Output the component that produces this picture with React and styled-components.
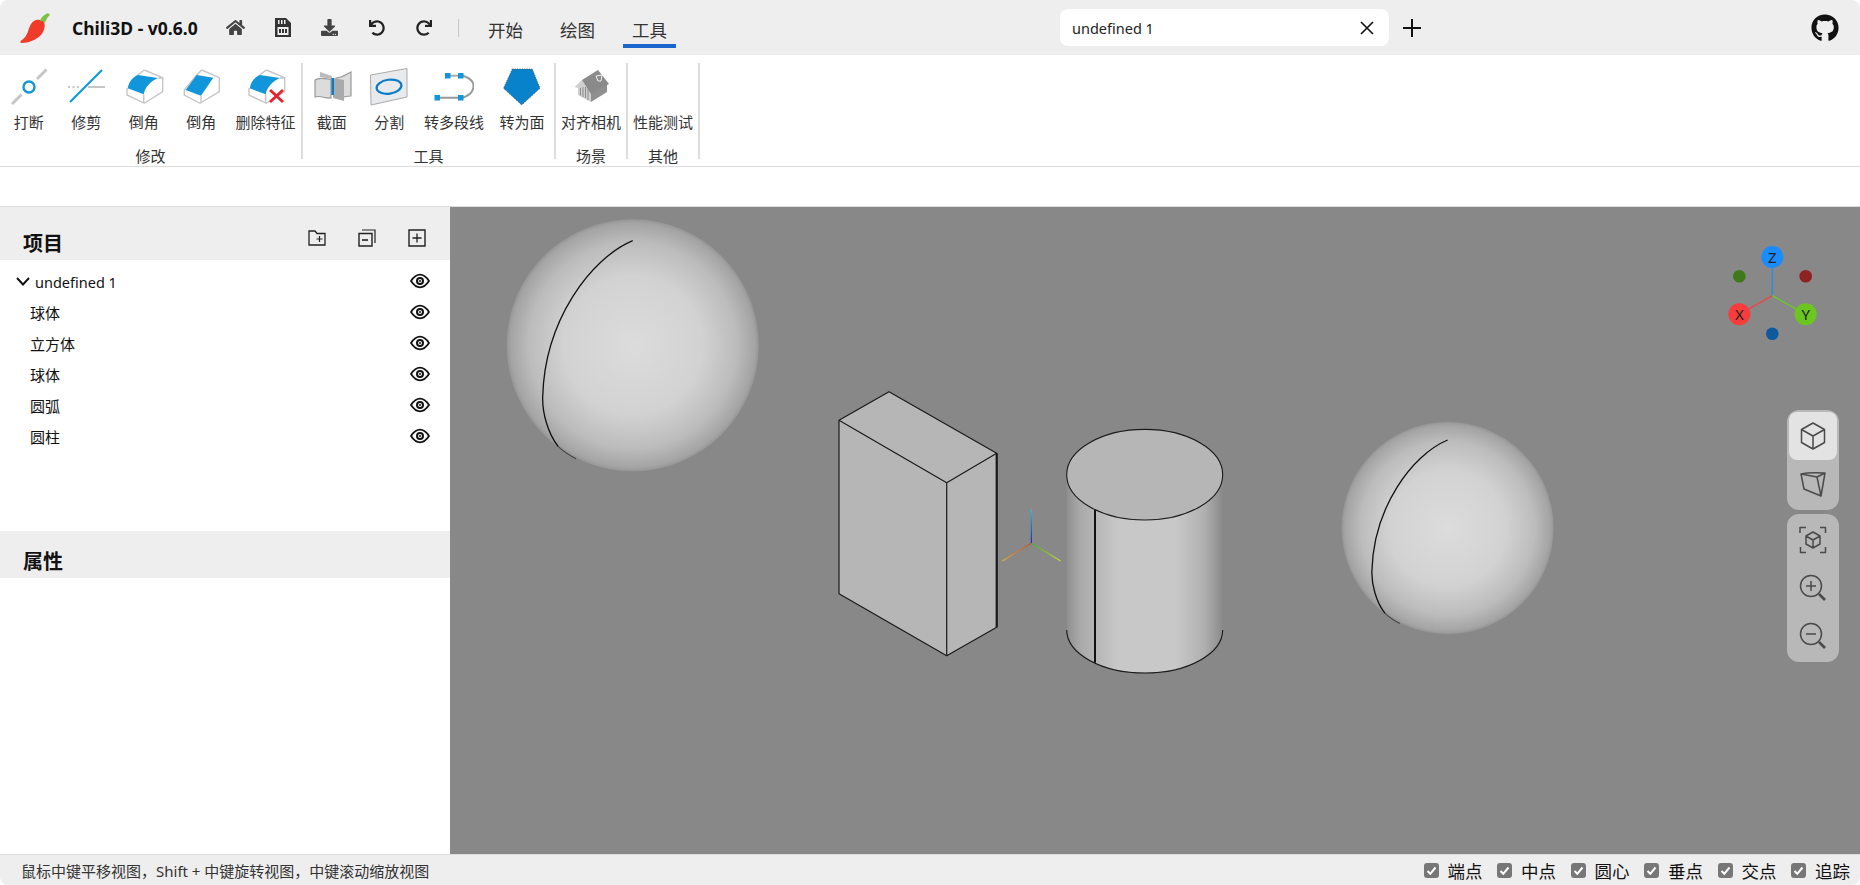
import styled, { createGlobalStyle } from "styled-components";
import { FaDownload, FaGithub, FaHome, FaRedo, FaUndo } from "react-icons/fa";

const GlobalStyle = createGlobalStyle`
  html, body {
    margin: 0;
    height: 100%;
    background: #fff;
  }
  #root {
    height: 100%;
  }
  * {
    box-sizing: border-box;
  }
`;

const BLUE = "#1296db";
const GRAY = "#c6c6c6";

const Shell = styled.div`
  height: 100vh;
  display: flex;
  flex-direction: column;
  overflow: hidden;
  border-radius: 8px;
  color: #222;
  font-family: "Noto Sans", "Noto Sans CJK SC", sans-serif;
`;

/* title bar */
const TitleBar = styled.header`
  flex: none;
  height: 55px;
  display: grid;
  grid-template-columns: 1060px 329px 1fr auto;
  align-items: center;
  background: #eee;
`;

const TitleLeft = styled.div`
  display: flex;
  align-items: center;
  height: 100%;
`;

const Logo = styled.svg`
  width: 32px;
  height: 32px;
  margin-left: 19px;
`;

const AppName = styled.span`
  margin-left: 21px;
  width: 125px;
  font-size: 17.5px;
  font-weight: 700;
  color: #111;
  white-space: nowrap;
`;

const QuickActions = styled.div`
  display: flex;
  align-items: center;
  margin-left: 15px;
`;

const QuickButton = styled.span`
  width: 47px;
  display: flex;
  justify-content: center;
  color: ${(p) => p.$color || "#333"};
`;

const VSep = styled.span`
  width: 1px;
  height: 18px;
  background: #c4c4c4;
  margin: 0 20px 0 11px;
`;

const Tabs = styled.nav`
  display: flex;
  height: 100%;
  gap: 19px;
`;

const Tab = styled.div`
  width: 53px;
  height: 48px;
  padding-top: 14px;
  display: flex;
  align-items: center;
  justify-content: center;
  font-size: 17.5px;
  color: #333;
  border-bottom: 4px solid ${(p) => (p.$active ? "#1a66cc" : "transparent")};
`;

const DocTab = styled.div`
  height: 37px;
  padding: 0 12px;
  display: flex;
  align-items: center;
  justify-content: space-between;
  background: #fff;
  border-radius: 8px;
  font-size: 14.5px;
`;

const CloseIcon = styled.svg`
  width: 14px;
  height: 14px;
  margin-right: 3px;
`;

const AddDoc = styled.svg`
  width: 20px;
  height: 20px;
  margin-left: 13px;
`;

const GithubLink = styled.span`
  display: flex;
  font-size: 28px;
  color: #111;
  margin-right: 21px;
`;

/* ribbon */
const Ribbon = styled.section`
  flex: none;
  height: 112px;
  display: flex;
  align-items: flex-start;
  padding-top: 8px;
  border-bottom: 1px solid #ddd;
`;

const RibbonGroup = styled.div`
  height: 96px;
  display: flex;
  flex-direction: column;
  justify-content: space-between;
  border-right: 2px solid #ddd;
`;

const GroupItems = styled.div`
  display: flex;
`;

const GroupLabel = styled.div`
  line-height: 20px;
  margin-bottom: -7px;
  font-size: 15px;
  text-align: center;
  color: #333;
`;

const RibbonItem = styled.div`
  width: ${(p) => p.$width || 57.5}px;
  display: flex;
  flex-direction: column;
  align-items: center;
  padding-top: 4px;
`;

const RibbonIcon = styled.svg`
  width: 40px;
  height: 40px;
`;

const RibbonText = styled.span`
  margin-top: 5px;
  line-height: 20px;
  font-size: 15px;
  color: #333;
  white-space: nowrap;
`;

const OptionStrip = styled.div`
  flex: none;
  height: 40px;
  border-bottom: 1px solid #ddd;
`;

/* main */
const Main = styled.main`
  flex: 1;
  min-height: 0;
  display: flex;
`;

const Sidebar = styled.aside`
  flex: none;
  width: 450px;
  display: flex;
  flex-direction: column;
`;

const PanelHeader = styled.div`
  flex: none;
  height: ${(p) => p.$height}px;
  display: flex;
  align-items: flex-end;
  justify-content: space-between;
  padding: 0 24px 3px 23px;
  background: #eee;
`;

const PanelTitle = styled.h2`
  margin: 0;
  font-size: 20px;
  line-height: 27px;
  font-weight: 700;
  color: #111;
`;

const HeaderActions = styled.div`
  display: flex;
  gap: 32px;
  margin-bottom: 10px;
`;

const HeaderIcon = styled.svg`
  width: 18px;
  height: 18px;
`;

const Tree = styled.div`
  height: 271px;
  padding-top: 6px;
`;

const TreeRow = styled.div`
  height: 31px;
  display: flex;
  align-items: center;
  padding: 0 20px 0 ${(p) => (p.$root ? 16 : 30)}px;
  font-size: ${(p) => (p.$root ? 14.5 : 15)}px;
  color: #111;
`;

const RowLabel = styled.span`
  flex: 1;
`;

const Chevron = styled.svg`
  width: 14px;
  height: 9px;
  margin-right: 5px;
`;

const Eye = styled.svg`
  width: 20px;
  height: 16px;
  margin-top: -1px;
`;

const Viewport = styled.div`
  position: relative;
  flex: 1;
  min-width: 0;
  background: #888;
`;

const Scene = styled.svg`
  display: block;
  width: 100%;
  height: 100%;
`;

const ViewControls = styled.div`
  position: absolute;
  top: 203px;
  right: 21px;
  display: flex;
  flex-direction: column;
  gap: 4px;
`;

const ControlGroup = styled.div`
  width: 52px;
  padding: 2px;
  display: flex;
  flex-direction: column;
  background: #b8b8b8;
  border-radius: 12px;
`;

const ControlButton = styled.div`
  height: 48px;
  display: flex;
  align-items: center;
  justify-content: center;
  border-radius: 8px;
  background: ${(p) => (p.$active ? "#e3e3e3" : "transparent")};
`;

const ControlIcon = styled.svg`
  width: 28px;
  height: 28px;
`;

/* status bar */
const StatusBar = styled.footer`
  flex: none;
  height: 31px;
  display: flex;
  align-items: center;
  justify-content: space-between;
  padding: 0 10px 0 21px;
  background: #eee;
  border-top: 1px solid #ddd;
  font-size: 15px;
  color: #333;
`;

const SnapList = styled.div`
  display: flex;
  gap: 14.5px;
`;

const SnapOption = styled.label`
  display: flex;
  align-items: center;
  gap: 9px;
  font-size: 17.5px;
  color: #111;
`;

const SnapBox = styled.span`
  width: 15px;
  height: 15px;
  display: flex;
  align-items: center;
  justify-content: center;
  background: #777;
  border-radius: 3px;
`;

const ChiliLogo = () => (
  <Logo viewBox="0 0 32 32">
    <path d="M21 8C26 8 27 14 24 20C21 26 12 31 2 31C1 30 1 29 3 28C9 24 9 17 12 12C14 9 17 7 21 8Z" fill="#f03a2a" />
    <path d="M21 9C22 5 25 3 29 1L31 3C28 5 27 8 26 11C24 9 23 9 21 9Z" fill="#7cc242" />
  </Logo>
);

const SaveIcon = () => (
  <svg width="17" height="19" viewBox="0 0 17 19">
    <path d="M1 0H12L17 5V19H1Z" fill="#333" />
    <path d="M4 2H5.5V6H4ZM7 2H8.5V6H7ZM10 2H11.5V6H10Z" fill="#eee" />
    <path d="M3.5 9H14.5V17H3.5Z" fill="#eee" />
    <path d="M5 11H7V15H5ZM8 11H10V15H8ZM11 11H13V15H11Z" fill="#333" />
  </svg>
);

const BreakIcon = () => (
  <RibbonIcon viewBox="0 0 40 40">
    <path d="M3 37L12.5 27.5M28 12L37.5 2.5" stroke={GRAY} strokeWidth="3" />
    <circle cx="20" cy="20" r="5.5" fill="none" stroke={BLUE} strokeWidth="2.4" />
  </RibbonIcon>
);

const TrimIcon = () => (
  <RibbonIcon viewBox="0 0 40 40">
    <path d="M2 20H15" stroke={GRAY} strokeWidth="2" strokeDasharray="2 2.5" />
    <path d="M22 20H39" stroke={GRAY} strokeWidth="2.2" />
    <path d="M4 35L36 3" stroke={BLUE} strokeWidth="2.2" />
  </RibbonIcon>
);

const FilletShape = () => (
  <>
    <path d="M20.3 3L38.7 10.7V24.7L20.3 36.3L3 28V21M13.7 8L20.3 3M19.7 27.3V36.3M34 11L38.7 10.7" fill="#fff" stroke={GRAY} strokeWidth="1.4" />
    <path d="M3.7 21.3C5 14 9 10 13.7 8L34 11C27 14 21 20 19.7 27.3Z" fill={BLUE} />
  </>
);

const FilletIcon = () => (
  <RibbonIcon viewBox="0 0 40 40">
    <FilletShape />
  </RibbonIcon>
);

const ChamferIcon = () => (
  <RibbonIcon viewBox="0 0 40 40">
    <path d="M20.7 3L38.3 10.7V24.7L19 36.3L3.3 28V23L15.7 8L20.7 3M20 28.7V36" fill="#fff" stroke={GRAY} strokeWidth="1.4" />
    <path d="M4.7 23L15.7 8L32.3 10.7L20 28.7Z" fill={BLUE} />
  </RibbonIcon>
);

const DeleteFeatureIcon = () => (
  <RibbonIcon viewBox="0 0 40 40">
    <FilletShape />
    <path d="M24 23L37 35M37 23L24 35" stroke="#e8222a" strokeWidth="2.8" />
  </RibbonIcon>
);

const SectionIcon = () => (
  <RibbonIcon viewBox="0 0 40 40">
    <path d="M3 13C9 9 13 13 19 12L19 31C13 32 9 28 3 30Z" fill="#dcdcdc" stroke="#999" strokeWidth="1.2" />
    <path d="M24 11C30 11 33 8 39 5V29C33 29 30 31 24 31Z" fill="#dcdcdc" stroke="#999" strokeWidth="1.2" />
    <path d="M21 11L32 13V34L21 31Z" fill="#aaa" />
    <path d="M8 5L20 9V12L8 10Z" fill="#bbb" />
    <path d="M20.7 11V28" stroke="#0a7cc8" strokeWidth="2.6" />
  </RibbonIcon>
);

const SplitIcon = () => (
  <RibbonIcon viewBox="0 0 40 40">
    <path d="M1.5 8L38 1.5V30L2 38Z" fill="#e8eaee" stroke="#aaa" strokeWidth="1" />
    <ellipse cx="20" cy="19.7" rx="12.5" ry="7" transform="rotate(-8 20 19.7)" fill="none" stroke="#0a7cc8" strokeWidth="2.2" />
  </RibbonIcon>
);

const PolylineIcon = () => (
  <RibbonIcon viewBox="0 0 40 40">
    <path d="M16 8.7H24" stroke="#aaa" strokeWidth="2" />
    <path d="M5 30.7H25M28.5 8.7C37 11 41 16 39 22C38 26 34 29 28.5 30.7" fill="none" stroke="#999" strokeWidth="2" />
    <path d="M11 6H16.5V11.5H11ZM24 6H29.5V11.5H24ZM0.5 28H6V33.5H0.5ZM24 28H29.5V33.5H24Z" fill={BLUE} />
  </RibbonIcon>
);

const FaceIcon = () => (
  <RibbonIcon viewBox="0 0 40 40">
    <path d="M10.3 2H30.3L38 21.3L19.7 38L1.5 21.3Z" fill="#0883cb" stroke="#555" strokeWidth="0.9" strokeDasharray="1 1.4" />
  </RibbonIcon>
);

const CameraHouseIcon = () => (
  <RibbonIcon viewBox="0 0 40 40">
    <path d="M11 13L3.5 20L7 21V28L20 35V26Z" fill="#cfcfcf" />
    <path d="M9.5 21V28.5M12 20V30M14.5 20V31M17 22V33" stroke="#8c8c8c" strokeWidth="1" />
    <path d="M20 26L36 17V25L20 35Z" fill="#8f8f8f" />
    <path d="M27 3L38 17L20 27L11 13Z" fill="#8a8a8a" />
    <path d="M25 9L31 8L30 14L27 14Z" fill="none" stroke="#eee" strokeWidth="1" />
  </RibbonIcon>
);

const AddFolderIcon = () => (
  <HeaderIcon viewBox="0 0 18 18">
    <path d="M1 2H7L9 4.5H17V16H1Z" fill="none" stroke="#222" strokeWidth="1.3" />
    <path d="M11.5 7V13M8.5 10H14.5" stroke="#222" strokeWidth="1.2" />
  </HeaderIcon>
);

const CollapseIcon = () => (
  <HeaderIcon viewBox="0 0 18 18">
    <path d="M1 4.5H14V17H1Z" fill="none" stroke="#222" strokeWidth="1.4" />
    <path d="M4 1H17V14" fill="none" stroke="#222" strokeWidth="1.2" />
    <path d="M4 11H10" stroke="#222" strokeWidth="1.6" />
  </HeaderIcon>
);

const AddBoxIcon = () => (
  <HeaderIcon viewBox="0 0 18 18">
    <path d="M1 1H17V17H1Z" fill="none" stroke="#222" strokeWidth="1.4" />
    <path d="M9 4.5V13.5M4.5 9H13.5" stroke="#222" strokeWidth="1.3" />
  </HeaderIcon>
);

const EyeIcon = () => (
  <Eye viewBox="0 0 20 16">
    <path d="M1 8C4 3.5 7 1.7 10 1.7S16 3.5 19 8C16 12.5 13 14.3 10 14.3S4 12.5 1 8Z" fill="none" stroke="#111" strokeWidth="1.8" />
    <circle cx="10" cy="8" r="3" fill="none" stroke="#111" strokeWidth="2" />
    <circle cx="10" cy="8" r="1" fill="#111" />
  </Eye>
);

const ICON = { fill: "none", stroke: "#4a4a4a", strokeWidth: 1.5, strokeLinejoin: "round" };

const IsoCubeIcon = () => (
  <ControlIcon viewBox="0 0 28 28">
    <path d="M14 1L25.5 7.5V20.5L14 27L2.5 20.5V7.5Z M2.5 7.5L14 14L25.5 7.5M14 14V27" {...ICON} />
  </ControlIcon>
);

const PerspectiveIcon = () => (
  <ControlIcon viewBox="0 0 28 28">
    <path d="M2 4C10 2 18 2.5 26 3L22 26L5 19Z M2 4L18 7L22 26M18 7L26 3" {...ICON} />
  </ControlIcon>
);

const FitIcon = () => (
  <ControlIcon viewBox="0 0 28 28">
    <path d="M1 7V1.5H7M21 1.5H26.5V7M26.5 21V26.5H21M7 26.5H1.5V21" {...ICON} />
    <path d="M14 6L21 10V18L14 22L7 18V10Z M7 10L14 14L21 10M14 14V22" {...ICON} />
  </ControlIcon>
);

const MagnifyIcon = ({ plus }) => (
  <ControlIcon viewBox="0 0 28 28">
    <circle cx="12" cy="12" r="10.5" {...ICON} />
    <path d="M7 12H17" {...ICON} />
    {plus && <path d="M12 7V17" {...ICON} />}
    <path d="M20 20L26 26" stroke="#4a4a4a" strokeWidth="2.6" />
  </ControlIcon>
);

const CheckMark = () => (
  <svg width="11" height="11" viewBox="0 0 11 11">
    <path d="M1.5 6L4.3 8.8L9.5 2.5" fill="none" stroke="#fff" strokeWidth="2" />
  </svg>
);

/* arc position for a sphere of radius 126, relative to its centre */
const SPHERE_ARC = "M0 -104.6C-42 -87 -88 -25 -90 51.4C-90.5 67 -85 88 -74.4 101.4";

const Sphere = ({ cx, cy, r }) => (
  <g transform={`translate(${cx} ${cy}) scale(${r / 126})`}>
    <circle r="126" fill="url(#sphereShade)" />
    <path d={SPHERE_ARC} fill="none" stroke="#111" strokeWidth="1.3" vectorEffect="non-scaling-stroke" />
    <path d="M-74.4 101.4C-68 107 -62 111 -56.7 113.4" fill="none" stroke="#444" strokeWidth="1.1" vectorEffect="non-scaling-stroke" />
  </g>
);

const GizmoBall = ({ x, y, color, label }) => (
  <>
    <circle cx={x} cy={y} r="11" fill={color} />
    <text x={x} y={y + 5.5} textAnchor="middle" fontSize="15" fontFamily="Noto Sans, sans-serif" fill="#222">
      {label}
    </text>
  </>
);

const Scene3D = () => (
  <Scene viewBox="450 207 1410 647">
    <defs>
      <radialGradient id="sphereShade">
        <stop offset="0" stopColor="#dcdcdc" />
        <stop offset="0.55" stopColor="#d2d2d2" />
        <stop offset="0.82" stopColor="#bcbcbc" />
        <stop offset="0.97" stopColor="#a4a4a4" />
        <stop offset="1" stopColor="#969696" />
      </radialGradient>
      <linearGradient id="cylinderShade">
        <stop offset="0" stopColor="#8e8e8e" />
        <stop offset="0.08" stopColor="#a8a8a8" />
        <stop offset="0.2" stopColor="#b8b8b8" />
        <stop offset="0.33" stopColor="#c8c8c8" />
        <stop offset="0.7" stopColor="#c8c8c8" />
        <stop offset="0.88" stopColor="#b0b0b0" />
        <stop offset="1" stopColor="#8a8a8a" />
      </linearGradient>
      <linearGradient id="axisZ" gradientUnits="userSpaceOnUse" x1="1031.3" y1="543.3" x2="1031.3" y2="509.3">
        <stop offset="0" stopColor="#0018c8" />
        <stop offset="1" stopColor="#22c8e8" />
      </linearGradient>
      <linearGradient id="axisX" gradientUnits="userSpaceOnUse" x1="1031.3" y1="543.3" x2="1002.3" y2="561">
        <stop offset="0" stopColor="#c05028" />
        <stop offset="1" stopColor="#d8b040" />
      </linearGradient>
      <linearGradient id="axisY" gradientUnits="userSpaceOnUse" x1="1031.3" y1="543.3" x2="1060.7" y2="561">
        <stop offset="0" stopColor="#40b030" />
        <stop offset="1" stopColor="#c8d830" />
      </linearGradient>
    </defs>

    <Sphere cx={632.7} cy={345.3} r={126} />
    <Sphere cx={1447.6} cy={528} r={106} />

    <g stroke="#1a1a1a" strokeWidth="1.2" strokeLinejoin="round">
      <path d="M889 391.7L996.7 453.3V627.3L946.7 655.7L839 593.7V420.3Z" fill="#b6b6b6" />
      <path d="M839 420.3L946.7 482.7L996.7 453.3M946.7 482.7V655.7" fill="none" />
      <path d="M996.7 453.3V627.3" fill="none" strokeWidth="2.2" />
    </g>

    <path d="M1031.3 543.3V509.3" stroke="url(#axisZ)" strokeWidth="1" />
    <path d="M1031.3 543.3L1002.3 561" stroke="url(#axisX)" strokeWidth="1.2" />
    <path d="M1031.3 543.3L1060.7 561" stroke="url(#axisY)" strokeWidth="1.2" />

    <path d="M1066.7 474.7V627.4A78 45.3 0 0 0 1222.7 627.4V474.7Z" fill="url(#cylinderShade)" />
    <ellipse cx="1144.7" cy="474.7" rx="78" ry="45.3" fill="#b6b6b6" stroke="#1a1a1a" strokeWidth="1.1" />
    <path d="M1066.7 630A78 43 0 0 0 1222.7 630" fill="none" stroke="#1a1a1a" strokeWidth="1.1" />
    <path d="M1095 510V662.7" stroke="#111" strokeWidth="2" />

    <path d="M1772.3 295.7V257" stroke="#2f8ce0" strokeWidth="1.5" />
    <path d="M1772.3 295.7L1739.3 314.3" stroke="#e84848" strokeWidth="1.5" />
    <path d="M1772.3 295.7L1805.7 314.3" stroke="#6bc72a" strokeWidth="1.5" />
    <circle cx="1739.3" cy="276.3" r="6.3" fill="#3f7a1a" />
    <circle cx="1805.7" cy="276.3" r="6.3" fill="#8e2222" />
    <circle cx="1772.3" cy="333.7" r="6.3" fill="#0f5a9c" />
    <GizmoBall x={1772.3} y={257} color="#1a8cff" label="Z" />
    <GizmoBall x={1739.3} y={314.3} color="#f73c3c" label="X" />
    <GizmoBall x={1805.7} y={314.3} color="#6bc71f" label="Y" />
  </Scene>
);

const RIBBON = [
  {
    label: "修改",
    items: [
      { text: "打断", icon: <BreakIcon /> },
      { text: "修剪", icon: <TrimIcon /> },
      { text: "倒角", icon: <FilletIcon /> },
      { text: "倒角", icon: <ChamferIcon /> },
      { text: "删除特征", icon: <DeleteFeatureIcon />, width: 71 },
    ],
  },
  {
    label: "工具",
    items: [
      { text: "截面", icon: <SectionIcon /> },
      { text: "分割", icon: <SplitIcon /> },
      { text: "转多段线", icon: <PolylineIcon />, width: 72 },
      { text: "转为面", icon: <FaceIcon />, width: 64 },
    ],
  },
  { label: "场景", items: [{ text: "对齐相机", icon: <CameraHouseIcon />, width: 70 }] },
  { label: "其他", items: [{ text: "性能测试", icon: <RibbonIcon as="div" />, width: 70 }] },
];

const TREE = ["球体", "立方体", "球体", "圆弧", "圆柱"];
const SNAPS = ["端点", "中点", "圆心", "垂点", "交点", "追踪"];

const App = () => {
  return (
    <Shell>
      <GlobalStyle />
      <TitleBar>
        <TitleLeft>
          <ChiliLogo />
          <AppName>Chili3D - v0.6.0</AppName>
          <QuickActions>
            <QuickButton $color="#444">
              <FaHome size={19} />
            </QuickButton>
            <QuickButton>
              <SaveIcon />
            </QuickButton>
            <QuickButton $color="#444">
              <FaDownload size={17} />
            </QuickButton>
            <QuickButton $color="#222">
              <FaUndo size={16} />
            </QuickButton>
            <QuickButton $color="#222">
              <FaRedo size={16} />
            </QuickButton>
          </QuickActions>
          <VSep />
          <Tabs>
            <Tab>开始</Tab>
            <Tab>绘图</Tab>
            <Tab $active>工具</Tab>
          </Tabs>
        </TitleLeft>
        <DocTab>
          undefined 1
          <CloseIcon viewBox="0 0 14 14">
            <path d="M1 1L13 13M13 1L1 13" stroke="#111" strokeWidth="1.6" />
          </CloseIcon>
        </DocTab>
        <AddDoc viewBox="0 0 20 20">
          <path d="M10 1V19M1 10H19" stroke="#111" strokeWidth="2" />
        </AddDoc>
        <GithubLink>
          <FaGithub />
        </GithubLink>
      </TitleBar>

      <Ribbon>
        {RIBBON.map((group) => (
          <RibbonGroup key={group.label}>
            <GroupItems>
              {group.items.map((item) => (
                <RibbonItem key={item.text + item.width} $width={item.width}>
                  {item.icon}
                  <RibbonText>{item.text}</RibbonText>
                </RibbonItem>
              ))}
            </GroupItems>
            <GroupLabel>{group.label}</GroupLabel>
          </RibbonGroup>
        ))}
      </Ribbon>
      <OptionStrip />

      <Main>
        <Sidebar>
          <PanelHeader $height={53}>
            <PanelTitle>项目</PanelTitle>
            <HeaderActions>
              <AddFolderIcon />
              <CollapseIcon />
              <AddBoxIcon />
            </HeaderActions>
          </PanelHeader>
          <Tree>
            <TreeRow $root>
              <Chevron viewBox="0 0 14 9">
                <path d="M1 1L7 7.5L13 1" fill="none" stroke="#111" strokeWidth="1.9" />
              </Chevron>
              <RowLabel>undefined 1</RowLabel>
              <EyeIcon />
            </TreeRow>
            {TREE.map((name, i) => (
              <TreeRow key={i}>
                <RowLabel>{name}</RowLabel>
                <EyeIcon />
              </TreeRow>
            ))}
          </Tree>
          <PanelHeader $height={47}>
            <PanelTitle>属性</PanelTitle>
          </PanelHeader>
        </Sidebar>
        <Viewport>
          <Scene3D />
          <ViewControls>
            <ControlGroup>
              <ControlButton $active>
                <IsoCubeIcon />
              </ControlButton>
              <ControlButton>
                <PerspectiveIcon />
              </ControlButton>
            </ControlGroup>
            <ControlGroup>
              <ControlButton>
                <FitIcon />
              </ControlButton>
              <ControlButton>
                <MagnifyIcon plus />
              </ControlButton>
              <ControlButton>
                <MagnifyIcon />
              </ControlButton>
            </ControlGroup>
          </ViewControls>
        </Viewport>
      </Main>

      <StatusBar>
        <span>鼠标中键平移视图，Shift + 中键旋转视图，中键滚动缩放视图</span>
        <SnapList>
          {SNAPS.map((name) => (
            <SnapOption key={name}>
              <SnapBox>
                <CheckMark />
              </SnapBox>
              {name}
            </SnapOption>
          ))}
        </SnapList>
      </StatusBar>
    </Shell>
  );
};

export default App;
